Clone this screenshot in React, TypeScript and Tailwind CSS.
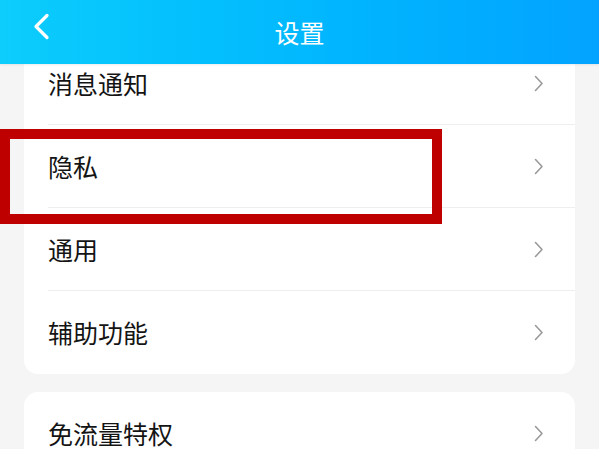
const GROUP_A = ["消息通知", "隐私", "通用", "辅助功能"];
const GROUP_B = ["免流量特权", "关于"];

function Chevron() {
  return (
    <svg width="10" height="17" viewBox="0 0 10 17" fill="none" className="shrink-0">
      <path d="M1.5 1.5 L8 8.5 L1.5 15.5" stroke="#9a9a9a" strokeWidth="1.6" strokeLinecap="round" strokeLinejoin="round" />
    </svg>
  );
}

function Row({ label, last }: { label: string; last?: boolean }) {
  return (
    <div className={`flex h-[83px] items-center justify-between pr-[31px] ${last ? "" : "border-b border-[#eeeeee]"}`}>
      <span className="text-[25px] leading-none text-[#141414]">{label}</span>
      <Chevron />
    </div>
  );
}

function Card({ items }: { items: string[] }) {
  return (
    <div className="mx-6 rounded-[14px] bg-white pl-6">
      {items.map((label, i) => (
        <Row key={label} label={label} last={i === items.length - 1} />
      ))}
    </div>
  );
}

export default function App() {
  return (
    <div
      className="relative h-[449px] w-[599px] overflow-hidden bg-[#f5f5f5]"
      style={{ fontFamily: '"Noto Sans CJK SC", "Noto Sans", sans-serif' }}
    >
      {/* content, scrolled up a bit under the header */}
      <div className="pt-[42px]">
        <Card items={GROUP_A} />
        <div className="h-[18px]" />
        <Card items={GROUP_B} />
      </div>

      {/* header */}
      <div className="absolute inset-x-0 top-0 flex h-16 items-center justify-center bg-gradient-to-r from-[#0ccdfc] to-[#03a3ff] shadow-[0_1px_2px_rgba(0,0,0,0.08)]">
        <svg width="18" height="28" viewBox="0 0 18 28" fill="none" className="absolute left-[32px] top-[13px]">
          <path d="M15 2.5 L4 13.5 L15 24.5" stroke="#ffffff" strokeWidth="3.2" strokeLinecap="round" strokeLinejoin="round" />
        </svg>
        <span className="text-[25px] leading-none text-white">设置</span>
      </div>

      {/* highlight box */}
      <div className="absolute left-0 top-[129px] h-[95px] w-[442px] border-[10px] border-[#bf0000]" />
    </div>
  );
}
